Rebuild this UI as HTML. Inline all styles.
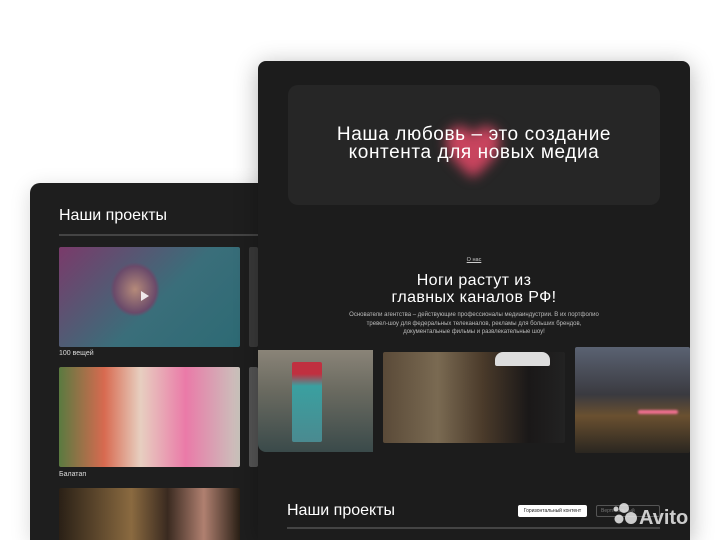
<!DOCTYPE html>
<html><head><meta charset="utf-8"><style>
*{margin:0;padding:0;box-sizing:border-box}
html,body{width:720px;height:540px;overflow:hidden}
body{background:#fff;position:relative;font-family:"Liberation Sans",sans-serif;color:#fff}
.a{position:absolute}
.card1{left:30px;top:183px;width:260px;height:357px;background:#1e1e1e;border-radius:10px 10px 0 0;box-shadow:0 4px 20px rgba(0,0,0,.15)}
.card2{left:258px;top:61px;width:432px;height:479px;background:#1c1c1c;border-radius:8px 8px 0 0;box-shadow:0 4px 24px rgba(0,0,0,.3)}
.ph{position:absolute;border-radius:2px}
.lbl{font-size:7px;color:#ddd}
</style></head><body>
<div class="a card1"></div>
<div class="a" style="left:59px;top:207px;font-size:16px">Наши проекты</div>
<div class="a" style="left:59px;top:234px;width:199px;height:2px;background:#444"></div>
<div class="ph" style="left:59px;top:247px;width:181px;height:100px;background:linear-gradient(135deg,#7a3a6a,#3a6e7a 55%,#2d6a74);"></div>
<div class="ph" style="left:110px;top:262px;width:50px;height:55px;background:radial-gradient(#b58a7a,#6a4a6a 60%,transparent 70%)"></div>
<div class="a" style="left:141px;top:291px;width:0;height:0;border-left:8px solid #fff;border-top:5px solid transparent;border-bottom:5px solid transparent;opacity:.85"></div>
<div class="ph" style="left:249px;top:247px;width:9px;height:100px;background:#3a3a3a"></div>
<div class="a lbl" style="left:59px;top:350px">100 вещей</div>
<div class="ph" style="left:59px;top:367px;width:181px;height:100px;background:linear-gradient(90deg,#5a7a40,#d86a50 25%,#e7cfc0 45%,#ea7aa8 70%,#c9c4bc)"></div>
<div class="ph" style="left:249px;top:367px;width:9px;height:100px;background:#555"></div>
<div class="a lbl" style="left:59px;top:471px">Балатап</div>
<div class="ph" style="left:59px;top:488px;width:181px;height:60px;background:linear-gradient(90deg,#2a2016,#8a6a40 40%,#3a2a20 60%,#b08070 80%,#2a2016)"></div>

<div class="a card2"></div>
<div class="a" style="left:288px;top:85px;width:372px;height:120px;background:#262626;border-radius:10px"></div>
<div class="a" style="left:441px;top:120px;width:64px;height:62px;filter:blur(6px)">
<svg width="64" height="62" viewBox="0 0 64 62"><path d="M32 58 C10 40 2 28 6 16 C10 4 26 2 32 16 C38 2 54 4 58 16 C62 28 54 40 32 58Z" fill="#c8445e"/></svg></div>
<div class="a" style="left:288px;top:126px;width:372px;text-align:center;font-size:19px;line-height:18px;letter-spacing:.6px">Наша любовь – это создание<br>контента для новых медиа</div>
<div class="a" style="left:258px;top:257px;width:432px;text-align:center;font-size:5.5px;text-decoration:underline;color:#ccc">О нас</div>
<div class="a" style="left:258px;top:272px;width:432px;text-align:center;font-size:16px;line-height:17px;letter-spacing:.4px">Ноги растут из<br>главных каналов РФ!</div>
<div class="a" style="left:343px;top:311px;width:262px;text-align:center;font-size:6px;line-height:8.5px;color:#bbb">Основатели агентства – действующие профессионалы медиаиндустрии. В их портфолио тревел-шоу для федеральных телеканалов, рекламы для больших брендов, документальные фильмы и развлекательные шоу!</div>
<div class="ph" style="left:258px;top:350px;width:115px;height:102px;background:linear-gradient(180deg,#8a8478,#6a6a60 40%,#3a4a4a);border-radius:0 0 0 8px"></div>
<div class="ph" style="left:292px;top:362px;width:30px;height:80px;background:linear-gradient(#c03040 15%,#3aa0a0 30%,#4a8a90)"></div>
<div class="ph" style="left:383px;top:352px;width:182px;height:91px;background:linear-gradient(90deg,#5a4a38,#7a6a52 30%,#4a3a2a 55%,#1a1818 80%,#222)"></div>
<div class="ph" style="left:495px;top:352px;width:55px;height:14px;background:#ddd;border-radius:8px 8px 2px 2px"></div>
<div class="ph" style="left:575px;top:347px;width:115px;height:106px;background:linear-gradient(180deg,#5a6272,#3a3a40 45%,#6a5030 65%,#2a2620)"></div>
<div class="ph" style="left:638px;top:410px;width:40px;height:4px;background:#f07090;filter:blur(1px)"></div>
<div class="a" style="left:287px;top:502px;font-size:16px">Наши проекты</div>
<div class="a" style="left:287px;top:527px;width:373px;height:2px;background:#444"></div>
<div class="a" style="left:518px;top:505px;width:69px;height:12px;background:#fff;border-radius:2px;color:#222;font-size:5px;line-height:12px;text-align:center">Горизонтальный контент</div>
<div class="a" style="left:596px;top:505px;width:64px;height:12px;border:1px solid #555;border-radius:2px;color:#777;font-size:5px;line-height:10px;padding-left:4px">Вертикальный</div>
<svg class="a" style="left:612px;top:499px" width="100" height="30" viewBox="0 0 100 30">
<g fill="rgba(235,235,235,.85)"><circle cx="12" cy="9" r="5"/><circle cx="7" cy="20" r="4.5"/><circle cx="19" cy="19" r="6"/><circle cx="4" cy="10" r="2.5"/>
<text x="27" y="25" font-family="Liberation Sans" font-size="20" font-weight="bold">Avito</text></g></svg>
</body></html>
